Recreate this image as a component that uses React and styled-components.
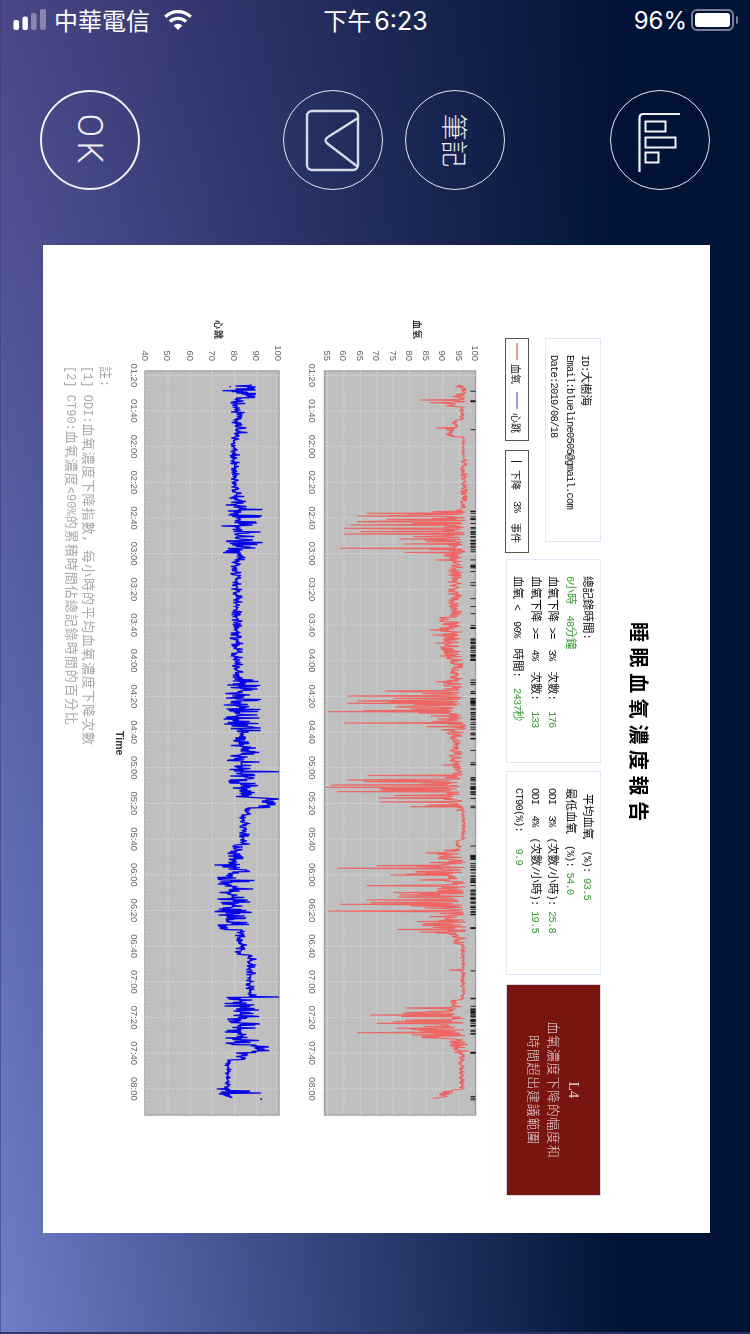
import React from 'react';
import styled, { createGlobalStyle } from 'styled-components';

const GlobalStyle = createGlobalStyle`
  html, body { margin: 0; padding: 0; background: #02143a; }
`;

const Screen = styled.div`
  width: 750px;
  height: 1334px;
  overflow: hidden;
  color: #fff;
  font-family: "Noto Sans CJK TC", "Liberation Sans", sans-serif;
  box-shadow: inset 0 -2px 0 rgba(46, 50, 100, 0.9), inset 1px 0 0 rgba(60, 64, 120, 0.6);
  background:
    linear-gradient(90deg, rgba(1, 19, 54, 0) 0%, rgba(1, 19, 54, 1) 83%),
    linear-gradient(180deg, #4a4788 0%, #5f6bb4 60%, #707ecb 100%);
`;

const StatusBar = styled.div`
  height: 40px;
  display: flex;
  align-items: center;
  padding: 0 12px 0 13px;
`;

const StatusSide = styled.div`
  flex: 1;
  display: flex;
  align-items: center;
  justify-content: ${({ $right }) => ($right ? 'flex-end' : 'flex-start')};
`;

const Carrier = styled.span`
  font-size: 24px;
  line-height: 40px;
  margin-left: 7px;
`;

const Clock = styled.span`
  font-size: 24px;
  line-height: 40px;
  & b { font-family: Inter, sans-serif; font-weight: 400; font-size: 25px; margin-left: 3px; }
`;

const Percent = styled.span`
  font-family: Inter, sans-serif;
  font-size: 24px;
  margin-right: 4px;
`;

const Battery = styled.div`
  position: relative;
  width: 43px;
  height: 22px;
  box-sizing: border-box;
  border: 2px solid #7a8094;
  border-radius: 6px;
  padding: 2px;
  margin-right: 4px;
  &::after {
    content: '';
    position: absolute;
    right: -6px;
    top: 5px;
    width: 2px;
    height: 8px;
    background: #7a8094;
    border-radius: 0 2px 2px 0;
  }
`;

const BatteryFill = styled.div`
  height: 100%;
  background: #fff;
  border-radius: 3px;
`;

const Toolbar = styled.div`
  display: flex;
  margin: 50px 0 55px 40px;
`;

const RoundButton = styled.div`
  width: 100px;
  height: 100px;
  box-sizing: border-box;
  border-radius: 50%;
  border: ${({ $thick }) => ($thick ? '2.5px solid #f1f1f6' : '1.8px solid #e6e7ee')};
  display: flex;
  align-items: center;
  justify-content: center;
  margin-left: ${({ $gap }) => $gap || 0}px;
  flex: none;
`;

const Turned = styled.span`
  display: block;
  transform: rotate(90deg);
  white-space: nowrap;
  font-size: ${({ $size }) => $size}px;
  line-height: 1;
  font-weight: 300;
  letter-spacing: ${({ $spacing }) => $spacing || 0}px;
  font-family: ${({ $latin }) => ($latin ? 'Roboto, sans-serif' : '"Noto Sans CJK TC", sans-serif')};
  color: #f0f0f4;
`;

const Sheet = styled.div`
  width: 667px;
  height: 988px;
  margin-left: 43px;
  background: #fff;
  overflow: hidden;
`;

/* the report is a landscape page lying on its side */
const Page = styled.div`
  width: 988px;
  height: 667px;
  transform-origin: 0 0;
  transform: translateX(667px) rotate(90deg);
  filter: blur(0.4px);
  color: #111;
  font-family: "Liberation Mono", monospace;
  font-size: 10.5px;
  letter-spacing: -0.8px;
`;

const Zh = styled.span`
  font-family: "Noto Sans CJK TC", sans-serif;
  font-size: 11.5px;
  letter-spacing: 0;
`;

const Title = styled.div`
  padding: 57px 0 0 377px;
  font-family: "Noto Sans CJK TC", serif;
  font-weight: 700;
  font-size: 20px;
  line-height: 28px;
  letter-spacing: 5.6px;
  color: #000;
  height: 28px;
  margin-bottom: 24px;
`;

const CardRow = styled.div`
  display: flex;
  margin-left: 93px;
  height: 96px;
`;

const LeftColumn = styled.div`
  width: 221px;
  flex: none;
  display: flex;
  flex-direction: column;
  justify-content: space-between;
`;

const Card = styled.div`
  box-sizing: border-box;
  width: ${({ $w }) => $w}px;
  height: ${({ $h }) => $h}px;
  flex: none;
  margin-right: ${({ $mr }) => $mr || 0}px;
  border: 1.5px solid #dbe9f9;
  padding: ${({ $pt }) => $pt}px 6px 0 16px;
  line-height: 15.4px;
  white-space: pre;
`;

const Good = styled.span`
  color: #3a9a34;
`;

const LegendRow = styled.div`
  display: flex;
  gap: 9px;
`;

const Legend = styled.div`
  box-sizing: border-box;
  width: 103px;
  height: 24px;
  border: 1.5px solid #555;
  display: flex;
  align-items: center;
  padding-left: ${({ $pl }) => $pl}px;
  white-space: pre;
  & ${Zh} { font-size: 10px; }
`;

const Swatch = styled.i`
  display: block;
  width: ${({ $w }) => $w}px;
  height: 1.5px;
  background: ${({ $c }) => $c};
  margin: 0 4px 0 ${({ $ml }) => $ml || 0}px;
`;

const TickMark = styled.i`
  display: block;
  width: 1px;
  height: 11px;
  background: #222;
  margin-right: 8px;
`;

const AlertCard = styled.div`
  box-sizing: border-box;
  width: 212px;
  height: 95px;
  margin-left: 1px;
  background: #7a140e;
  border: 1px solid #cfd9e8;
  color: #e2d3d3;
  text-align: center;
  padding-top: 16px;
  line-height: 20px;
  font-family: "Liberation Serif", serif;
  font-size: 15px;
  letter-spacing: 0;
  & ${Zh} { font-size: 13px; letter-spacing: 0.7px; font-weight: 300; }
`;

const ChartBox = styled.svg`
  display: block;
  margin-left: 70px;
  margin-top: ${({ $mt }) => $mt}px;
`;

const TimeLabel = styled.div`
  margin: -3px 0 0 486px;
  height: 14px;
  line-height: 14px;
  font-family: "Liberation Sans", sans-serif;
  font-weight: 700;
  font-size: 10.5px;
  letter-spacing: 0;
  color: #333;
`;

const Notes = styled.div`
  margin: 0 0 0 121px;
  color: #a9a9a9;
  font-family: "Liberation Mono", monospace;
  font-size: 12px;
  line-height: 16px;
  letter-spacing: 0;
  white-space: pre;
  & ${Zh} { font-size: 13px; line-height: 1; letter-spacing: 1px; }
`;

// split a line into cjk runs and latin runs, the two have different widths
const mix = (text) =>
  text.split(/([\u2E80-\u9FFF\uFF00-\uFFEF]+)/).map((part, i) =>
    i % 2 ? <Zh key={i}>{part}</Zh> : part
  );

const rng = (seed) => () => {
  seed = (seed * 1664525 + 1013904223) % 4294967296;
  return seed / 4294967296;
};

// all positions below are page y of the picture, plot begins at 371
const PLOT_START = 371;
const PLOT_LEN = 744;
const AXIS_X = 56;

const oxySegs = [
  [385, 403, 96, 3, 1.5], [403, 407, 93, 3, 1], [407, 420, 96, 0.8, 0.5], [420, 429, 94, 2, 0.5],
  [429, 437, 92.5, 1.5, 1], [437, 460, 96.3, 0.3, 0.3], [460, 508, 96.3, 0.8, 1.2],
  [510, 553, 94, 24, 3], [553, 560, 94, 4, 2], [560, 615, 94, 2.5, 2], [615, 660, 93, 4, 3],
  [660, 680, 94, 2, 2.5], [680, 690, 93, 4, 3], [690, 722, 92, 22, 4], [722, 735, 95, 6, 2],
  [735, 765, 94, 2, 2], [765, 775, 95, 2, 1], [775, 806, 92, 26, 4], [806, 811, 95.5, 2, 1],
  [811, 840, 96.3, 0.5, 0.5], [840, 850, 95, 1, 1], [850, 860, 93, 5, 3], [860, 935, 92, 18, 5],
  [935, 945, 95, 2, 2], [945, 1000, 96.2, 0.7, 0.5], [1000, 1005, 94, 2, 2], [1005, 1040, 93, 16, 4],
  [1040, 1048, 95, 3, 3], [1048, 1053, 94.5, 2, 4], [1053, 1090, 96, 1, 0.8], [1090, 1098, 92, 3, 2],
];

const oxySpikes = [
  [400, 83], [402.7, 86], [428, 88], [511.7, 87], [513.3, 67], [516, 64], [519.3, 73], [521.7, 64],
  [525, 62], [528.3, 60], [531.7, 65], [534, 60], [536.7, 81], [541.7, 85], [548.3, 59], [560, 88],
  [618, 89], [630, 86], [635, 87], [643, 88], [648, 90], [681.7, 88], [691.7, 78], [696, 61],
  [698.3, 75], [701, 64], [703.3, 61], [706.7, 76], [710.7, 66], [711.7, 55], [723, 60], [726.7, 85],
  [765, 90], [780, 61], [781.7, 66], [785, 56], [787.3, 54.5], [791.7, 58], [795, 87], [806.7, 80],
  [853, 85], [865.7, 70], [868.3, 58], [873, 85], [885.7, 67], [892.7, 75], [895, 77], [900, 67],
  [902.7, 68], [904.3, 59], [911, 55], [916.7, 86], [927.3, 87], [970, 92], [1011.7, 85], [1013.3, 78],
  [1015, 68], [1021.7, 75], [1023.3, 70], [1028.3, 76], [1032.7, 64], [1038.3, 90], [1098.3, 87],
];

const pulseSegs = [
  [385, 398, 86, 8, 4], [398, 436, 81, 3, 5], [436, 493, 80, 2, 2.5], [493, 505, 81, 4, 5],
  [505, 553, 82, 8, 12], [553, 563, 82, 3, 5], [563, 675, 81, 3, 3], [675, 680, 82, 3, 5],
  [680, 797, 83, 8, 9], [799, 808, 95, 5, 5], [808, 815, 86, 2, 2], [815, 845, 84, 2, 3],
  [845, 865, 80, 3, 4], [865, 925, 79, 7, 10], [925, 930, 75, 3, 3], [930, 955, 83, 3, 3],
  [955, 997, 87, 2, 3], [997, 1045, 83, 8, 9], [1045, 1053, 90, 3, 8], [1053, 1060, 83, 3, 3],
  [1060, 1090, 77, 1.5, 1.5], [1090, 1098, 78, 6, 14],
];

const pulseSpikes = [
  [390.7, 74.6], [771.7, 100], [799, 100], [865, 71], [911.7, 71], [997, 100], [1089, 72], [1093, 92],
];

const eventClusters = [
  [391, 392, 1], [400, 403, 3], [429, 430, 1], [511, 555, 26], [559, 572, 7], [582, 586, 2],
  [598, 599, 1], [606, 607, 1], [613, 614, 1], [625, 630, 5], [637, 661, 22], [678, 725, 30],
  [726, 741, 8], [750, 752, 1], [760, 765, 3], [777, 795, 16], [798, 799, 1], [806, 808, 2],
  [846, 847, 1], [853, 917, 48], [927, 929, 3], [970, 971, 1], [998, 999, 2], [1005, 1035, 26],
  [1050, 1053, 4], [1095, 1100, 3],
];

const buildLine = (segs, spikes, seed, oxy) => {
  const rand = rng(seed);
  const pts = [];
  segs.forEach(([from, to, base, down, up]) => {
    for (let p = from; p < to; p += 0.5) {
      const r = rand();
      const shape = oxy ? (down > 10 ? Math.pow(r, 3) : r) : r * r;
      const v = rand() < 0.55 ? base - down * shape : base + up * (oxy ? rand() : Math.pow(rand(), 2));
      pts.push([p, v]);
    }
  });
  spikes.forEach(([p, v]) => {
    const hit = pts.reduce((best, q, i) => (Math.abs(q[0] - p) < Math.abs(pts[best][0] - p) ? i : best), 0);
    pts[hit] = [p, v];
  });
  return pts;
};

const buildEvents = () => {
  const rand = rng(77);
  const out = [];
  eventClusters.forEach(([from, to, n]) => {
    for (let i = 0; i < n; i++) out.push(from + rand() * (to - from));
  });
  return out;
};

const HOURS = ['01:20', '01:40', '02:00', '02:20', '02:40', '03:00', '03:20', '03:40', '04:00', '04:20', '04:40',
  '05:00', '05:20', '05:40', '06:00', '06:20', '06:40', '07:00', '07:20', '07:40', '08:00'];

const Chart = ({ title, titleY, top, high, scale, values, plotH, mt, height, line, color, weight, events, labelGap, dots }) => {
  const sx = (p) => p - PLOT_START + AXIS_X;
  const sy = (v) => top + (high - v) * scale;
  const d = line.map(([p, v], i) => `${i ? 'L' : 'M'}${sx(p).toFixed(1)} ${sy(v).toFixed(1)}`).join('');
  return (
    <ChartBox $mt={mt} width="860" height={height}>
      <rect x={AXIS_X} y={top} width={PLOT_LEN} height={plotH} fill="#bfbfbf" stroke="#a2a2a2" strokeWidth="1.5" />
      {values.map((v) => (
        <g key={v}>
          {v !== high && (
            <line x1={AXIS_X} x2={AXIS_X + PLOT_LEN} y1={sy(v)} y2={sy(v)} stroke="#dcdcdc" strokeWidth="0.8" strokeDasharray="2 1.5" />
          )}
          <text x={AXIS_X - 10} y={sy(v) + 3.5} textAnchor="end" fontFamily="Liberation Sans" fontSize="9.5" fill="#666" letterSpacing="0">{v}</text>
        </g>
      ))}
      {HOURS.map((h, i) => {
        const x = AXIS_X + 4.3 + i * 35.68;
        return (
          <g key={h}>
            <line x1={x} x2={x} y1={top} y2={top + plotH} stroke="#dcdcdc" strokeWidth="0.8" strokeDasharray="2 1.5" />
            <text x={x} y={top + plotH + labelGap} textAnchor="middle" fontFamily="Liberation Sans" fontSize="9.5" fill="#666" letterSpacing="0">{h}</text>
          </g>
        );
      })}
      <path d={d} fill="none" stroke={color} strokeWidth={weight} />
      {dots && dots.map(([p, v]) => <circle key={p} cx={sx(p)} cy={sy(v)} r="0.9" fill={color} />)}
      {events && events.map((p, i) => (
        <line key={i} x1={sx(p)} x2={sx(p)} y1={top} y2={top + 5} stroke="#111" strokeWidth="0.9" />
      ))}
      <text x="5" y={titleY} fontFamily="Noto Sans CJK TC" fontWeight="700" fontSize="9" fill="#333" letterSpacing="1">{title}</text>
    </ChartBox>
  );
};

const oxyLine = buildLine(oxySegs, oxySpikes, 11, true);
const pulseLine = buildLine(pulseSegs, pulseSpikes, 29, false);
const events = buildEvents();

const SignalBars = () => (
  <svg width="34" height="22" viewBox="0 0 34 22">
    <rect x="0.4" y="11" width="5.6" height="10" rx="2" fill="#fff" />
    <rect x="9.5" y="7.5" width="5.4" height="13.5" rx="2" fill="#fff" />
    <rect x="18" y="4" width="5.6" height="17" rx="2" fill="#fff" fillOpacity="0.35" />
    <rect x="27" y="0" width="6" height="21" rx="2" fill="#fff" fillOpacity="0.35" />
  </svg>
);

const WifiGlyph = () => (
  <svg width="32" height="22" viewBox="0 0 32 22" style={{ marginLeft: 12 }}>
    <path d="M16 21 L11.6 16.4 A6.4 6.4 0 0 1 20.4 16.4 Z" fill="#fff" />
    <path d="M7.9 12.7 A11.6 11.6 0 0 1 24.1 12.7" fill="none" stroke="#fff" strokeWidth="3.2" />
    <path d="M3.2 7.9 A18.4 18.4 0 0 1 28.8 7.9" fill="none" stroke="#fff" strokeWidth="3.2" />
  </svg>
);

const FormIcon = () => (
  <svg width="56" height="64" viewBox="0 0 56 64" fill="none" stroke="#d8dae6" strokeWidth="2.4">
    <rect x="2" y="3" width="51" height="59" rx="5" />
    <path d="M53 10 L23 29 Q18 32 23 36 L53 59" />
  </svg>
);

const ChartIcon = () => (
  <svg width="46" height="66" viewBox="0 0 46 66" fill="none" stroke="#f2f2f6" strokeWidth="2">
    <path d="M2.5 65 V11 Q2.5 7 6.5 7 H43" strokeWidth="2.2" />
    <rect x="8.5" y="14.5" width="20" height="10" />
    <rect x="8.5" y="30.5" width="30" height="10" />
    <rect x="8.5" y="45.5" width="13" height="10" />
  </svg>
);

export default function App() {
  return (
    <>
      <GlobalStyle />
      <Screen>
        <StatusBar>
          <StatusSide>
            <SignalBars />
            <Carrier>中華電信</Carrier>
            <WifiGlyph />
          </StatusSide>
          <Clock>下午<b>6:23</b></Clock>
          <StatusSide $right>
            <Percent>96%</Percent>
            <Battery><BatteryFill /></Battery>
          </StatusSide>
        </StatusBar>

        <Toolbar>
          <RoundButton $thick><Turned $latin $size={35} $spacing={4}>OK</Turned></RoundButton>
          <RoundButton $gap={143}><FormIcon /></RoundButton>
          <RoundButton $gap={22}><Turned $size={27}>筆記</Turned></RoundButton>
          <RoundButton $gap={105}><ChartIcon /></RoundButton>
        </Toolbar>

        <Sheet>
          <Page>
            <Title>睡眠血氧濃度報告</Title>
            <CardRow>
              <LeftColumn>
                <Card $w={204} $h={56} $pt={6}>
                  {mix('ID:大樹海')}{'\n'}{'Email:blueline0505@gmail.com'}{'\n'}{'Date:2019/08/18'}
                </Card>
                <LegendRow>
                  <Legend $pl={4}>
                    <Swatch $w={17} $c="#ef9a98" />{mix('血氧')}
                    <Swatch $w={17} $c="#9a9cf0" $ml={8} />{mix('心跳')}
                  </Legend>
                  <Legend $pl={10}>
                    <TickMark />{mix('下降  3%  事件')}
                  </Legend>
                </LegendRow>
              </LeftColumn>
              <Card $w={204} $h={95} $pt={4} $mr={8}>
                {mix('總記錄時間:')}{'\n'}
                <Good>{mix('6小時  48分鐘')}</Good>{'\n'}
                {mix('血氧下降 >=  3%  次數:  ')}<Good>176</Good>{'\n'}
                {mix('血氧下降 >=  4%  次數:  ')}<Good>133</Good>{'\n'}
                {mix('血氧 <  90%  時間:  ')}<Good>{mix('2437秒')}</Good>
              </Card>
              <Card $w={204} $h={95} $pt={4} $mr={8}>
                {mix(' 平均血氧  (%): ')}<Good>93.5</Good>{'\n'}
                {mix('最低血氧  (%): ')}<Good>54.0</Good>{'\n'}
                {mix('ODI  3%  (次數/小時): ')}<Good>25.8</Good>{'\n'}
                {mix('ODI  4%  (次數/小時): ')}<Good>19.5</Good>{'\n'}
                {mix('CT90(%):   ')}<Good>9.9</Good>
              </Card>
              <AlertCard>
                L4<br />
                <Zh>血氧濃度下降的幅度和</Zh><br />
                <Zh>時間超出建議範圍</Zh>
              </AlertCard>
            </CardRow>

            <Chart
              title="血氧" titleY={72} top={10.5} high={100} scale={3.29} plotH={151}
              values={[100, 95, 90, 85, 80, 75, 70, 65, 60, 55]}
              mt={19} height={183} line={oxyLine} color="#ee6663" weight={1.1}
              events={events} labelGap={15}
            />
            <Chart
              title="心跳" titleY={76} top={12} high={100} scale={2.22} plotH={134}
              values={[100, 90, 80, 70, 60, 50, 40]}
              mt={12} height={167} line={pulseLine} color="#0606e6" weight={1.3}
              labelGap={14} dots={[[386.7, 78], [1099, 92]]}
            />
            <TimeLabel>Time</TimeLabel>
            <Notes>
              {mix('註:')}{'\n'}
              {mix('[1] ODI:血氧濃度下降指數, 每小時的平均血氧濃度下降次數')}{'\n'}
              {mix('[2] CT90:血氧濃度<90%的累積時間佔總記錄時間的百分比')}
            </Notes>
          </Page>
        </Sheet>
      </Screen>
    </>
  );
}
